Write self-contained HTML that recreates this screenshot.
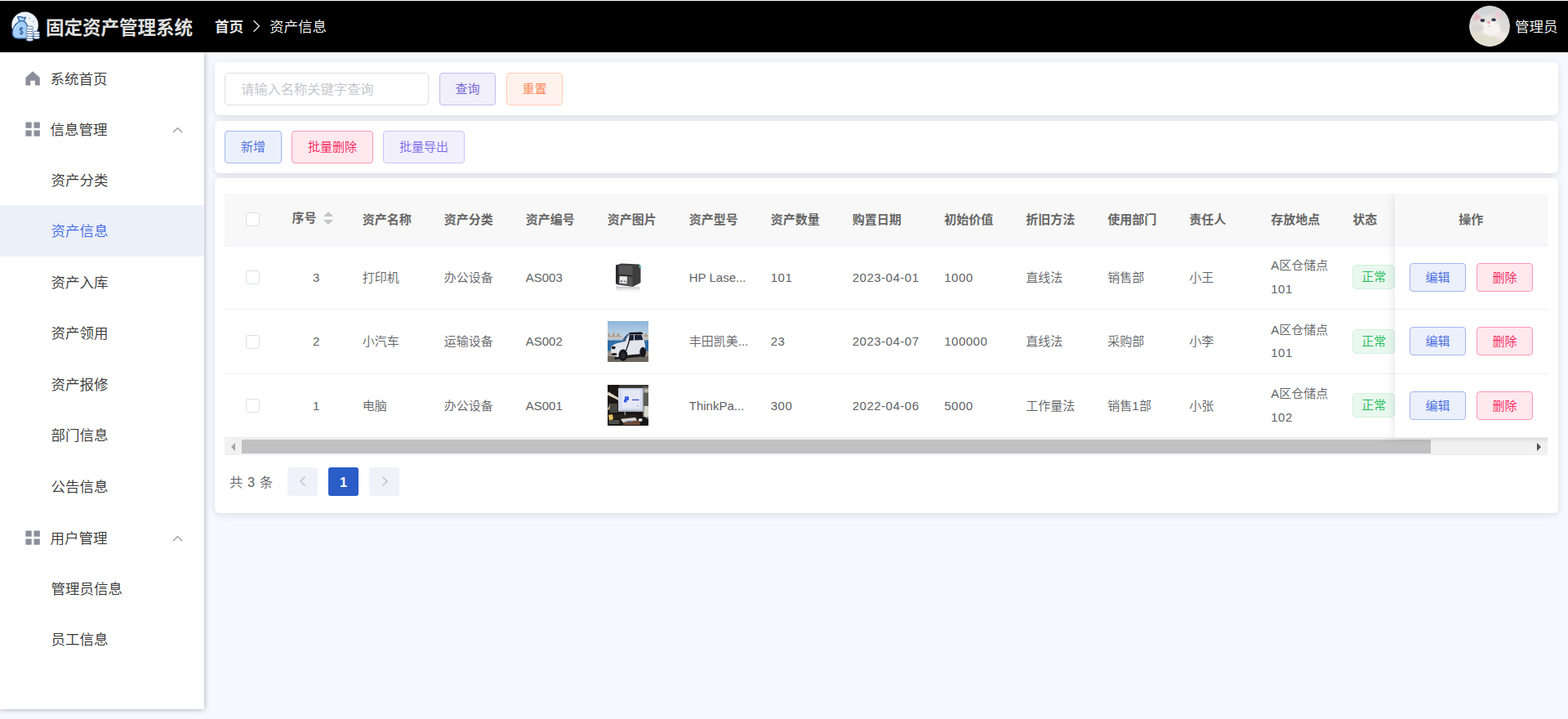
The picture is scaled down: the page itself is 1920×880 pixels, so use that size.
<!DOCTYPE html>
<html lang="zh-CN">
<head>
<meta charset="utf-8">
<title>固定资产管理系统</title>
<style>
*{box-sizing:border-box;}
html,body{margin:0;padding:0;}
body{width:1920px;height:880px;overflow:hidden;background:#f8f8ff;position:relative;
  font-family:"Liberation Sans","Noto Sans CJK SC",sans-serif;color:#606266;font-size:15px;font-weight:350;}
/* ---------- header ---------- */
.header{position:absolute;left:0;top:0;width:1920px;height:64px;background:#000;border-top:1px solid #fff;color:#fff;}
.logo{position:absolute;left:8px;top:7px;width:48px;height:48px;}
.title{position:absolute;left:56px;top:1.6px;height:63px;line-height:63px;font-size:22.5px;font-weight:bold;color:#e0e0e0;white-space:nowrap;}
.crumb{position:absolute;left:263px;top:1px;height:63px;line-height:63px;font-size:17.5px;white-space:nowrap;color:#fff;}
.crumb b{font-weight:bold;color:#e8e8e8;}
.crumb .sep{display:inline-block;width:32px;height:20px;vertical-align:-4px;position:relative;}.crumb .sep svg{position:absolute;left:10px;top:1px;}
.user{position:absolute;right:12.4px;top:1px;height:63px;line-height:63px;font-size:17.5px;color:#fff;white-space:nowrap;}
.avatar{position:absolute;left:1799px;top:6px;width:50px;height:50px;border-radius:50%;overflow:hidden;}
/* ---------- sidebar ---------- */
.side{position:absolute;left:0;top:64px;width:250px;height:804px;background:#fff;box-shadow:0 0 7px rgba(0,0,20,.34);}
.menu{list-style:none;margin:0;padding:0;position:relative;top:-0.25px;}
.menu li{height:62.5px;line-height:67px;font-size:17.5px;color:#333;position:relative;padding-left:61.5px;white-space:nowrap;}
.menu li.on{background:#ecf0fa;color:#4169e1;}
.menu li.s{padding-left:62.6px;line-height:65px;}
.menu li .ic.g{top:22.5px;left:31.3px;}
.menu li .ic{position:absolute;left:31px;top:23.5px;width:18px;height:18px;}
.menu li .arr{position:absolute;left:211px;top:26.5px;width:13px;height:13px;}
/* ---------- main ---------- */
.card{position:absolute;left:263px;width:1645px;background:#fff;border-radius:6px;box-shadow:0 2.5px 8px rgba(0,0,0,.08),0 1px 14px rgba(0,0,0,.04);}
.c1{top:76px;height:65px;}
.c2{top:148px;height:64px;}
.c3{top:218px;height:410px;}
.inp{position:absolute;left:12px;top:13px;width:250px;height:40px;border:1px solid #dcdfe6;border-radius:5px;
  padding:0 19px;line-height:38px;font-size:16.25px;color:#c0c4cc;white-space:nowrap;}
.btn{position:absolute;height:40px;line-height:38px;border-width:1px;border-style:solid;border-radius:4px;font-size:15px;text-align:center;white-space:nowrap;}
.b-q{color:#6a5acd;background:#f0effa;border-color:#c3bdeb;}
.b-r{color:#ff7f50;background:#fff2ed;border-color:#ffccb9;}
.b-a{color:#3b64de;background:#ecf0fc;border-color:#a3b7f0;}
.b-d{color:#f81f58;background:#ffe8ee;border-color:#ff97b0;}
.b-e{color:#7b68ee;background:#f2f0fd;border-color:#cac3f8;}

/* ---------- table ---------- */
.tb{position:absolute;left:12px;top:19px;width:1620px;height:298.5px;overflow:hidden;}
.row{position:absolute;left:0;width:1620px;border-bottom:1px solid #ebeef5;background:#fff;}
.row.h{top:0;height:63.5px;background:#f8f8f8;font-weight:bold;color:#666;}
.row.r1{top:63.5px;height:78px;}
.row.r2{top:141.5px;height:79px;}
.row.r3{top:220.5px;height:78px;}
.cell{position:absolute;top:0;height:100%;display:flex;align-items:center;padding:1.5px 12.5px 0;font-size:15px;line-height:28.75px;white-space:nowrap;overflow:hidden;}
.cell.c{justify-content:center;}
.r1 .cell,.r3 .cell{padding-top:3.5px;}
.r1 .ck,.r1 .img,.r3 .ck{margin-top:-2px;}
.r1 .tag,.r3 .tag,.r3 .img{margin-top:-4px;}
.r1 .cell.w,.r3 .cell.w{padding-top:1.5px;}
.cell.w .n{top:0;}
.cell.w{white-space:normal;}
.cell .el{overflow:hidden;text-overflow:ellipsis;white-space:nowrap;display:block;width:100%;}
.k0{left:0;width:68.75px;}
.k1{left:68.75px;width:87.5px;}
.k2{left:156.25px;width:100px;}
.k3{left:256.25px;width:100px;}
.k4{left:356.25px;width:100px;}
.k5{left:456.25px;width:100px;}
.k6{left:556.25px;width:100px;}
.k7{left:656.25px;width:100px;}
.k8{left:756.25px;width:112.5px;}
.k9{left:868.75px;width:100px;}
.k10{left:968.75px;width:100px;}
.k11{left:1068.75px;width:100px;}
.k12{left:1168.75px;width:100px;}
.k13{left:1268.75px;width:100px;}
.k14{left:1368.75px;width:100px;overflow:visible;}
.n{letter-spacing:.5px;position:relative;top:0;}
.l{position:relative;top:0;}
.ck{width:17px;height:17px;border:1px solid #dcdfe6;border-radius:3px;background:#fff;}
.sort{display:inline-block;position:relative;width:30px;height:42.5px;top:-1.5px;}
.sort i{position:absolute;left:8.5px;width:0;height:0;border:6px solid transparent;}
.sort i.u{border-bottom-color:#c0c4cc;top:6.5px;}
.sort i.d{border-top-color:#c0c4cc;top:22.5px;}
.img{width:50px;height:50px;display:block;}
.tag{display:inline-block;height:30px;line-height:28px;padding:0 10px;border:1px solid #d3f1dc;background:#e9f8ee;color:#20bb58;border-radius:5px;font-size:15px;}
.fxw{position:absolute;left:1424.5px;top:19px;width:207.5px;height:298.5px;overflow:hidden;}
.fx{position:absolute;left:20px;top:0;width:187.5px;height:298.5px;box-shadow:0 0 12px rgba(0,0,0,.12);background:#fff;}
.fx .row.r1{background:#fff;}
.fx .row{width:187.5px;}
.ob{position:absolute;top:50%;margin-top:-17.5px;height:35px;line-height:34px;width:69px;border-width:1px;border-style:solid;border-radius:4px;font-size:15px;text-align:center;}
.sb{position:absolute;left:12px;top:317.5px;width:1620px;height:21px;background:#f1f1f1;}
.sb:after{content:"";position:absolute;left:1415px;top:0;width:205px;height:7px;background:linear-gradient(to bottom,rgba(0,0,0,.07),rgba(0,0,0,0));-webkit-mask-image:linear-gradient(to right,transparent,#000 22px);mask-image:linear-gradient(to right,transparent,#000 22px);}
.sb:before{content:"";position:absolute;left:0;bottom:0;width:100%;height:1px;background:#ebeef5;}
.sb .th{position:absolute;left:21px;top:2px;width:1456px;height:17px;background:#c1c1c1;}
.sb .al{position:absolute;left:8px;top:6px;width:0;height:0;border:5px solid transparent;border-right:5px solid #a3a3a3;border-left:0;}
.sb .ar{position:absolute;right:8px;top:6px;width:0;height:0;border:5px solid transparent;border-left:5px solid #505050;border-right:0;}
/* ---------- pagination ---------- */
.pg{position:absolute;left:12px;top:354px;height:35px;width:600px;}
.pg .tot{position:absolute;left:6px;top:1px;line-height:35px;font-size:16.25px;color:#606266;white-space:nowrap;word-spacing:1.2px;}
.pg .pb{position:absolute;top:0;width:37px;height:35px;border-radius:3px;background:#f1f1fa;text-align:center;line-height:37px;font-size:16.25px;font-weight:bold;color:#c0c4cc;}
.pg .pb.on{background:#2a5dc8;color:#fff;}
.pg .pb svg{position:absolute;left:12.5px;top:10.3px;}
</style>
</head>
<body>
<div class="header">
  <svg class="logo" viewBox="0 0 48 48"><defs><filter id="lb" x="-10%" y="-10%" width="120%" height="120%"><feGaussianBlur stdDeviation="0.25"/></filter></defs><g filter="url(#lb)">
<circle cx="22.6" cy="22.9" r="16.3" fill="#edf3f9"/>
<path d="M28 12.6l1.3 1.9-1.3 1.9-1.3-1.9zM33 16.6l1.3 1.9-1.3 1.9-1.3-1.9z" fill="#b9d3e4"/>
<path d="M13.6 12.9 Q16 11.7 18.4 12.9 Q21 14 23.5 13.2 L21.3 18 Q26.3 21.5 26 29 L25.6 38.6 Q21 39.4 15 39.2 Q7.2 39.3 7 32.2 Q7.4 23.6 15.8 18 Z" fill="#a4cffb" stroke="#2d5c99" stroke-width="1.25" stroke-linejoin="round"/>
<path d="M15.8 18 Q18.5 17.2 21.3 18" fill="none" stroke="#2d5c99" stroke-width="1.1"/>
<path d="M9.6 28.6 Q11 23.6 15.3 21" fill="none" stroke="#dcedfd" stroke-width="0.9"/>
<path d="M20.3 26.9 Q18.2 25.6 16.6 27 Q15.6 28.7 18 29.7 Q20.8 30.8 19.8 32.6 Q18.2 34 15.9 32.6 M18.1 24.8 V35" fill="none" stroke="#2d5c99" stroke-width="1.15"/>
<g fill="#fff" stroke="#2d5c99" stroke-width="0.8">
<ellipse cx="28.4" cy="40.4" rx="4.3" ry="1.9"/><ellipse cx="28.4" cy="37.5" rx="4.3" ry="1.9"/><ellipse cx="28.4" cy="34.6" rx="4.3" ry="1.9"/><ellipse cx="28.4" cy="31.7" rx="4.3" ry="1.9"/><ellipse cx="28.4" cy="28.8" rx="4.3" ry="1.9"/><ellipse cx="28.4" cy="25.9" rx="4.3" ry="1.9"/>
<ellipse cx="36.7" cy="37.9" rx="4" ry="1.9"/><ellipse cx="36.7" cy="35" rx="4" ry="1.9"/><ellipse cx="36.7" cy="32.1" rx="4" ry="1.9"/>
</g></g></svg>
  <div class="title">固定资产管理系统</div>
  <div class="crumb"><b>首页</b><span class="sep"><svg width="12" height="16" viewBox="0 0 12 16"><path d="M2.6 1.2 L9.4 8 L2.6 14.8" fill="none" stroke="#f0f0f0" stroke-width="1.25"/></svg></span>资产信息</div>
  <div class="avatar"><svg viewBox="0 0 50 50" width="50" height="50"><defs><filter id="ab" x="-20%" y="-20%" width="140%" height="140%"><feGaussianBlur stdDeviation="1.1"/></filter><filter id="ab2" x="-30%" y="-30%" width="160%" height="160%"><feGaussianBlur stdDeviation="0.6"/></filter><clipPath id="ac"><circle cx="25" cy="25" r="25"/></clipPath></defs>
<g clip-path="url(#ac)"><rect width="50" height="50" fill="#d2d3d3"/>
<g filter="url(#ab)">
<rect x="-5" y="-5" width="60" height="24" fill="#d3d4d5"/>
<path d="M3 20 L7 8 Q10 6 16 13 Q24 9 30 11 L36 5 Q39 4 39 16 Q48 22 50 34 L50 40 L0 40 L0 26 Z" fill="#e3e2e0"/>
<path d="M4.5 20 L7.5 8.5 Q10.5 8 15.5 15 Z" fill="#e2b9bf"/>
<path d="M30.5 12.5 L36 5.5 Q38.5 6 38.6 18 Z" fill="#ebcacd"/>
<ellipse cx="26" cy="28" rx="13" ry="9" fill="#f5f4f2"/>
<ellipse cx="10" cy="27" rx="8" ry="6" fill="#d8d7d4"/>
<ellipse cx="43" cy="24" rx="6" ry="8" fill="#dcdbd9"/>
<path d="M-2 31 Q12 30 22 36 Q30 40 36 36 L52 30 L52 52 L-2 52 Z" fill="#e2ded0"/>
<ellipse cx="39" cy="37" rx="7" ry="4.5" fill="#f1ebe6"/>
</g>
<g filter="url(#ab2)">
<ellipse cx="16.4" cy="18" rx="2.8" ry="1.9" fill="#34364f"/>
<ellipse cx="30" cy="17.2" rx="2.7" ry="1.9" fill="#34364f"/>
<ellipse cx="24" cy="20.4" rx="2.2" ry="1.7" fill="#f0a3b0"/>
<path d="M22.8 25.2 Q24.4 23.6 26 25.4" stroke="#e7a9b3" stroke-width="1" fill="none"/>
</g></g></svg></div>
  <div class="user">管理员</div>
</div>
<div class="side">
  <ul class="menu">
    <li><svg class="ic" viewBox="0 0 18 18"><path d="M9 0.3 L17.8 8 V17.6 H12 V11.8 H6.2 V17.6 H0.4 V8 Z" fill="#8c8f99"/></svg>系统首页</li>
    <li><svg class="ic g" viewBox="0 0 18 18"><path d="M0.4 0.5h7.3v7.3H0.4zM10.5 0.5h7.3v7.3h-7.3zM0.4 10.5h7.3v7.3H0.4zM10.5 10.5h7.3v7.3h-7.3z" fill="#8c8f99"/></svg>信息管理<svg class="arr" viewBox="0 0 13 13"><path d="M1 9 L6.5 3.5 L12 9" fill="none" stroke="#909399" stroke-width="1.2"/></svg></li>
    <li class="s">资产分类</li>
    <li class="on s">资产信息</li>
    <li class="s">资产入库</li>
    <li class="s">资产领用</li>
    <li class="s">资产报修</li>
    <li class="s">部门信息</li>
    <li class="s">公告信息</li>
    <li><svg class="ic g" viewBox="0 0 18 18"><path d="M0.4 0.5h7.3v7.3H0.4zM10.5 0.5h7.3v7.3h-7.3zM0.4 10.5h7.3v7.3H0.4zM10.5 10.5h7.3v7.3h-7.3z" fill="#8c8f99"/></svg>用户管理<svg class="arr" viewBox="0 0 13 13"><path d="M1 9 L6.5 3.5 L12 9" fill="none" stroke="#909399" stroke-width="1.2"/></svg></li>
    <li class="s">管理员信息</li>
    <li class="s">员工信息</li>
  </ul>
</div>
<div class="card c1">
  <div class="inp">请输入名称关键字查询</div>
  <div class="btn b-q" style="left:275px;top:13px;width:69px;">查询</div>
  <div class="btn b-r" style="left:357px;top:13px;width:69px;">重置</div>
</div>
<div class="card c2">
  <div class="btn b-a" style="left:12px;top:12px;width:70px;">新增</div>
  <div class="btn b-d" style="left:94px;top:12px;width:100px;">批量删除</div>
  <div class="btn b-e" style="left:206px;top:12px;width:100px;">批量导出</div>
</div>
<div class="card c3" id="c3">
<div class="tb">
<div class="row h"><div class="cell k0 c"><span class="ck" style="position:relative;top:-1px"></span></div><div class="cell k1 c"><span style="position:relative;top:-1.5px">序号</span><span class="sort"><i class="u"></i><i class="d"></i></span></div><div class="cell k2 ">资产名称</div><div class="cell k3 ">资产分类</div><div class="cell k4 ">资产编号</div><div class="cell k5 ">资产图片</div><div class="cell k6 ">资产型号</div><div class="cell k7 ">资产数量</div><div class="cell k8 ">购置日期</div><div class="cell k9 ">初始价值</div><div class="cell k10 ">折旧方法</div><div class="cell k11 ">使用部门</div><div class="cell k12 ">责任人</div><div class="cell k13 ">存放地点</div><div class="cell k14 ">状态</div></div>
<div class="row r1"><div class="cell k0 c"><span class="ck"></span></div><div class="cell k1 c"><span class="n">3</span></div><div class="cell k2 ">打印机</div><div class="cell k3 ">办公设备</div><div class="cell k4 "><span class="l">AS003</span></div><div class="cell k5 "><svg class="img" viewBox="0 0 50 50"><defs><filter id="pb" x="-20%" y="-20%" width="140%" height="140%"><feGaussianBlur stdDeviation="0.55"/></filter><linearGradient id="pg" x1="0" y1="0" x2="0" y2="1"><stop offset="0" stop-color="#b9b9b9"/><stop offset="1" stop-color="#fff" stop-opacity="0"/></linearGradient></defs>
<rect width="50" height="50" fill="#ffffff"/>
<g filter="url(#pb)">
<path d="M10.5 35.5 L40 36.5 L40 44 L11 43 Z" fill="url(#pg)"/>
<path d="M10 9.5 L17 7.5 L38.5 8.5 L40.5 10 L40.5 31 L31 36 L12.5 33.5 L10 32 Z" fill="#3c3c3e"/>
<path d="M13.5 10 L30.5 10.5 L30.5 35.5 L13.5 33 Z" fill="#555557"/>
<path d="M13.5 21 L30.5 22 L30.5 23.5 L13.5 22.3 Z" fill="#1f1f20"/>
<path d="M10 9.5 L13.5 10 L13.5 33 L10 32 Z" fill="#2c2c2e"/>
<path d="M15 23 L24 23.6 L23.5 32.4 L14.3 31.6 Z" fill="#e9e9e9"/>
<path d="M15.6 28 h3 v2.2 h-3z M20 28.6 h2.3 v2 h-2.3z" fill="#8c8c8c"/>
<path d="M38.6 9.6 L41 10.6 L41 13 L38.6 12.6 Z" fill="#55c8cc"/>
</g></svg></div><div class="cell k6 "><span class="l">HP Lase...</span></div><div class="cell k7 "><span class="n">101</span></div><div class="cell k8 "><span class="n">2023-04-01</span></div><div class="cell k9 "><span class="n">1000</span></div><div class="cell k10 ">直线法</div><div class="cell k11 ">销售部</div><div class="cell k12 ">小王</div><div class="cell k13 w"><div>A区仓储点<br><span class="n">101</span></div></div><div class="cell k14 "><span class="tag">正常</span></div></div>
<div class="row r2"><div class="cell k0 c"><span class="ck"></span></div><div class="cell k1 c"><span class="n">2</span></div><div class="cell k2 ">小汽车</div><div class="cell k3 ">运输设备</div><div class="cell k4 "><span class="l">AS002</span></div><div class="cell k5 "><svg class="img" viewBox="0 0 50 50"><defs><filter id="cb" x="-20%" y="-20%" width="140%" height="140%"><feGaussianBlur stdDeviation="0.75"/></filter><linearGradient id="sky" x1="0" y1="0" x2="0" y2="1"><stop offset="0" stop-color="#86b1d6"/><stop offset="1" stop-color="#c3d8e8"/></linearGradient><clipPath id="cc"><rect width="50" height="50"/></clipPath></defs>
<g clip-path="url(#cc)"><rect width="50" height="50" fill="#8fb7d9"/>
<g filter="url(#cb)">
<rect x="-3" y="-3" width="56" height="24" fill="url(#sky)"/>
<path d="M-2 17 h3 v-2 h2 v3 h3 v-3 h1.5 v-2 h1 v5 h3 v-3 h3 v3 h3 v3 h-20z" fill="#b09c8a"/>
<path d="M43 17 h3 v-2 h2 v2 h4 v7 h-9z" fill="#b0a58c"/>
<rect x="-3" y="19" width="56" height="5" fill="#c9cdd0" opacity=".7"/>
<rect x="-3" y="23.5" width="56" height="14" fill="#2f6ca5"/>
<rect x="-3" y="36.5" width="56" height="7" fill="#9a9088"/>
<rect x="-3" y="43" width="56" height="10" fill="#6d665f"/>
<path d="M8 47 L46 43 L46 40 L10 42 Z" fill="#1d1d1f"/>
<path d="M4 33 Q5 28 14 26.5 L21 25 Q24 16 29 14.6 L40 14.4 Q43 15 44.5 22 L46 30 L46 38 L40 40 L22 42 L12 44 L4.5 42 Z" fill="#e3e5ea"/>
<path d="M22 24.5 Q24.5 17 28 15.6 L24.5 15.8 Q20 19 17.5 25.2 Z" fill="#3e6089"/>
<path d="M27 14 L41 13.6 Q43 14 43.5 16 L27.5 16.4 Q25 16 27 14 Z" fill="#101114"/>
<path d="M27.5 17 L32 16.8 L32 23.6 L26.4 24 Z M33 16.8 L41.5 16.6 L43.6 23 L33 23.6 Z" fill="#1a2036"/>
<path d="M27.6 16.4 L26 26 L22.6 36" stroke="#16181d" stroke-width="1.3" fill="none"/>
<ellipse cx="7.2" cy="32.6" rx="2.6" ry="1.8" fill="#15161a"/>
<ellipse cx="8" cy="40.5" rx="3.4" ry="1.5" fill="#1a1b1f"/>
<ellipse cx="19" cy="41.6" rx="5.4" ry="7.2" fill="#16171a"/>
<ellipse cx="43.2" cy="38" rx="3.8" ry="6.2" fill="#16171a"/>
<ellipse cx="19" cy="42" rx="2.6" ry="3.8" fill="#2a2d33"/>
</g></g></svg></div><div class="cell k6 ">丰田凯美...</div><div class="cell k7 "><span class="n">23</span></div><div class="cell k8 "><span class="n">2023-04-07</span></div><div class="cell k9 "><span class="n">100000</span></div><div class="cell k10 ">直线法</div><div class="cell k11 ">采购部</div><div class="cell k12 ">小李</div><div class="cell k13 w"><div>A区仓储点<br><span class="n">101</span></div></div><div class="cell k14 "><span class="tag">正常</span></div></div>
<div class="row r3"><div class="cell k0 c"><span class="ck"></span></div><div class="cell k1 c"><span class="n">1</span></div><div class="cell k2 ">电脑</div><div class="cell k3 ">办公设备</div><div class="cell k4 "><span class="l">AS001</span></div><div class="cell k5 "><svg class="img" viewBox="0 0 50 50"><defs><filter id="mb" x="-20%" y="-20%" width="140%" height="140%"><feGaussianBlur stdDeviation="0.75"/></filter><clipPath id="mc"><rect width="50" height="50"/></clipPath></defs>
<g clip-path="url(#mc)"><rect width="50" height="50" fill="#1c1916"/>
<g filter="url(#mb)">
<rect x="-3" y="-3" width="56" height="56" fill="#1c1916"/>
<rect x="14" y="0" width="40" height="4" fill="#3a3732"/>
<rect x="43" y="2" width="10" height="40" fill="#5d5c58"/>
<rect x="44.5" y="26" width="8" height="13.5" fill="#d9d8d0"/>
<rect x="44.5" y="4.5" width="8" height="5" fill="#b5b3a8"/>
<path d="M0 10 L1 8.6 L13.5 16 L13.5 21 L12.4 18.6 L0 12.4 Z" fill="#d9d5c5"/>
<path d="M0 30 L3 23 L4.5 23.5 L1.5 31 Z" fill="#e3d9b0"/>
<rect x="2.5" y="23" width="9.5" height="11" fill="#45443f"/>
<rect x="13" y="4" width="30.6" height="28.4" fill="#c6cede"/>
<rect x="14.2" y="5" width="28" height="25.4" fill="#d6dcf0"/>
<rect x="17.6" y="6.6" width="22.4" height="22" fill="#e6e8f6"/>
<path d="M21 14.2 h5 v4.8 h-2.4 v2.6 h-3.6 v-3.6 h1 z" fill="#3c5ee0"/>
<rect x="30" y="17.8" width="8.6" height="1.3" fill="#3b4fb8"/>
<rect x="36.8" y="25" width="1.2" height="2" fill="#8aa6e0"/>
<rect x="13" y="31" width="30.6" height="1.8" fill="#b9bcc4"/>
<rect x="20.5" y="32.8" width="1.6" height="5" fill="#8e8c84"/>
<rect x="7" y="37" width="30" height="4" fill="#26221e"/>
<rect x="19" y="44" width="21" height="5" fill="#6e4a34"/>
<path d="M36 39 L46 39.5 L50 44 L50 48 L40 47.5 Z" fill="#141416"/>
<path d="M16 41.8 L34 40 L36.4 43.6 L18.6 46 Z" fill="#d3d2cc"/>
<rect x="23" y="44" width="7" height="1.2" fill="#5f7fd0"/>
<ellipse cx="40.2" cy="43" rx="2.5" ry="1.9" fill="#dcdcdc"/>
<path d="M1 37 L6 36 L7 42 L2 44 Z" fill="#e3c05e"/>
<rect x="1.5" y="43" width="13" height="5" fill="#4e4d4a"/>
</g></g></svg></div><div class="cell k6 "><span class="l">ThinkPa...</span></div><div class="cell k7 "><span class="n">300</span></div><div class="cell k8 "><span class="n">2022-04-06</span></div><div class="cell k9 "><span class="n">5000</span></div><div class="cell k10 ">工作量法</div><div class="cell k11 ">销售<span class="n">1</span>部</div><div class="cell k12 ">小张</div><div class="cell k13 w"><div>A区仓储点<br><span class="n">102</span></div></div><div class="cell k14 "><span class="tag">正常</span></div></div>
</div>
<div class="fxw"><div class="fx"><div class="row h"><div class="cell c" style="left:0;width:187.5px;">操作</div></div><div class="row r1"><div class="ob b-a" style="left:18.5px;">编辑</div><div class="ob b-d" style="left:100.5px;">删除</div></div><div class="row r2"><div class="ob b-a" style="left:18.5px;">编辑</div><div class="ob b-d" style="left:100.5px;">删除</div></div><div class="row r3"><div class="ob b-a" style="left:18.5px;">编辑</div><div class="ob b-d" style="left:100.5px;">删除</div></div></div></div>
<div class="sb"><div class="al"></div><div class="th"></div><div class="ar"></div></div>
<div class="pg"><span class="tot">共 3 条</span>
<div class="pb" style="left:77px;"><svg width="12" height="14" viewBox="0 0 12 14"><path d="M8.5 1.5 L3 7 L8.5 12.5" fill="none" stroke="#c0c4cc" stroke-width="1.6"/></svg></div>
<div class="pb on" style="left:127px;">1</div>
<div class="pb" style="left:177px;"><svg width="12" height="14" viewBox="0 0 12 14"><path d="M3.5 1.5 L9 7 L3.5 12.5" fill="none" stroke="#c0c4cc" stroke-width="1.6"/></svg></div>
</div>
</div>
</body>
</html>
